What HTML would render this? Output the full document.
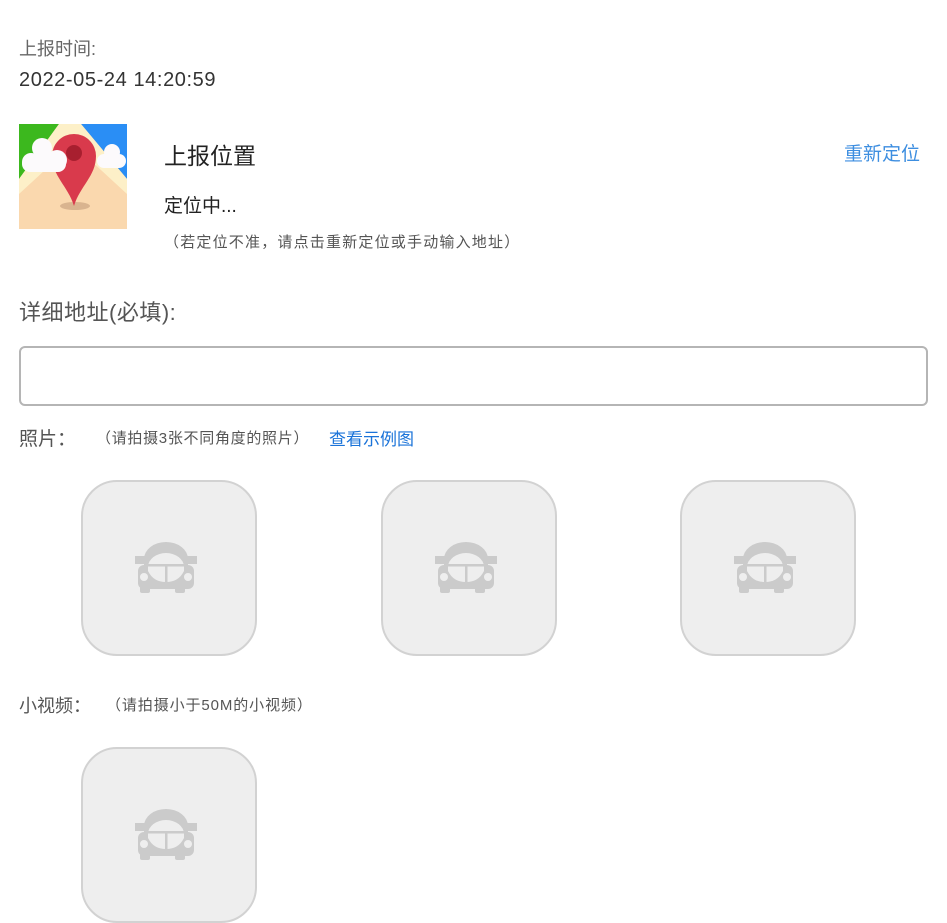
<!DOCTYPE html>
<html><head><meta charset="utf-8"><style>
body{margin:0;width:947px;height:859px;background:#fff;position:relative;overflow:hidden;font-family:"Liberation Sans","Noto Sans CJK SC",sans-serif;}
.a{position:absolute;white-space:nowrap;}
.box{position:absolute;width:172px;height:172px;border:2px solid #d2d2d2;border-radius:36px;background:#eeeeee;}
.box svg{position:absolute;left:47px;top:53px;}
</style></head><body>
<div class="a" style="left:19px;top:35px;font-size:18px;color:#666;">上报时间:</div>
<div class="a" style="left:19px;top:69px;font-size:20px;letter-spacing:0.6px;color:#333;">2022-05-24 14:20:59</div>
<svg class="a" style="left:19px;top:124px" width="108" height="105" viewBox="0 0 108 105">
<rect width="108" height="105" fill="#fad8ae"/>
<polygon points="0,0 40,0 0,55" fill="#3cb81e"/>
<polygon points="62,0 108,0 108,55" fill="#2a8ef5"/>
<polygon points="40,0 62,0 108,55 108,70 70,35 38,35 0,70 0,55" fill="#fdf0c8"/>
<ellipse cx="56" cy="82" rx="15" ry="4" fill="#d9b48f"/>
<path d="M55 82 C49 62 33 52 33 32 A22 22 0 0 1 77 32 C77 52 61 62 55 82Z" fill="#d93a4c"/>
<circle cx="55" cy="29" r="8" fill="#a81f2f"/>
<g fill="#fcfafc"><circle cx="23" cy="24" r="10"/><circle cx="38" cy="36" r="10"/><circle cx="12" cy="38" r="9"/><rect x="3" y="32" width="44" height="16" rx="8"/>
<circle cx="93" cy="28" r="8"/><rect x="78" y="30" width="29" height="14" rx="7"/></g>
</svg>
<div class="a" style="left:164px;top:137px;font-size:23px;color:#222;">上报位置</div>
<div class="a" style="left:844px;top:139px;font-size:19px;color:#3d8ee0;">重新定位</div>
<div class="a" style="left:164px;top:191px;font-size:19px;color:#222;">定位中...</div>
<div class="a" style="left:164px;top:231px;font-size:15px;letter-spacing:1.2px;color:#555;">（若定位不准，请点击重新定位或手动输入地址）</div>
<div class="a" style="left:19px;top:295px;font-size:22px;letter-spacing:0.5px;color:#555;">详细地址(必填):</div>
<div class="a" style="left:19px;top:346px;width:905px;height:56px;border:2px solid #b5b5b5;border-radius:6px;"></div>
<div class="a" style="left:19px;top:424px;font-size:19px;color:#555;">照片：</div>
<div class="a" style="left:96px;top:427px;font-size:15px;letter-spacing:0.7px;color:#555;">（请拍摄3张不同角度的照片）</div>
<div class="a" style="left:329px;top:425px;font-size:17px;color:#1a73d9;">查看示例图</div>
<div class="box" style="left:81px;top:480px;"><svg width="75" height="65" viewBox="0 0 75 65" style="left:47px;top:53px"><g fill="#cbcbcb"><path d="M14 52 V24 A22 17 0 0 1 58 24 V52Z"/><rect x="5" y="21" width="10" height="8"/><rect x="57" y="21" width="10" height="8"/><rect x="8" y="30" width="56" height="24" rx="6"/><rect x="10" y="50" width="10" height="8" rx="2"/><rect x="45" y="50" width="10" height="8" rx="2"/></g><path d="M18 32 A18 14 0 0 1 54 32 L54 36 C50 44 44 47 36 47 C28 47 22 44 18 36Z" fill="#eee"/><rect x="35" y="30" width="2.5" height="18" fill="#cbcbcb"/><rect x="18" y="29" width="36" height="2.5" fill="#cbcbcb"/><circle cx="14" cy="42" r="4" fill="#eee"/><circle cx="58" cy="42" r="4" fill="#eee"/></svg></div>
<div class="box" style="left:381px;top:480px;"><svg width="75" height="65" viewBox="0 0 75 65" style="left:47px;top:53px"><g fill="#cbcbcb"><path d="M14 52 V24 A22 17 0 0 1 58 24 V52Z"/><rect x="5" y="21" width="10" height="8"/><rect x="57" y="21" width="10" height="8"/><rect x="8" y="30" width="56" height="24" rx="6"/><rect x="10" y="50" width="10" height="8" rx="2"/><rect x="45" y="50" width="10" height="8" rx="2"/></g><path d="M18 32 A18 14 0 0 1 54 32 L54 36 C50 44 44 47 36 47 C28 47 22 44 18 36Z" fill="#eee"/><rect x="35" y="30" width="2.5" height="18" fill="#cbcbcb"/><rect x="18" y="29" width="36" height="2.5" fill="#cbcbcb"/><circle cx="14" cy="42" r="4" fill="#eee"/><circle cx="58" cy="42" r="4" fill="#eee"/></svg></div>
<div class="box" style="left:680px;top:480px;"><svg width="75" height="65" viewBox="0 0 75 65" style="left:47px;top:53px"><g fill="#cbcbcb"><path d="M14 52 V24 A22 17 0 0 1 58 24 V52Z"/><rect x="5" y="21" width="10" height="8"/><rect x="57" y="21" width="10" height="8"/><rect x="8" y="30" width="56" height="24" rx="6"/><rect x="10" y="50" width="10" height="8" rx="2"/><rect x="45" y="50" width="10" height="8" rx="2"/></g><path d="M18 32 A18 14 0 0 1 54 32 L54 36 C50 44 44 47 36 47 C28 47 22 44 18 36Z" fill="#eee"/><rect x="35" y="30" width="2.5" height="18" fill="#cbcbcb"/><rect x="18" y="29" width="36" height="2.5" fill="#cbcbcb"/><circle cx="14" cy="42" r="4" fill="#eee"/><circle cx="58" cy="42" r="4" fill="#eee"/></svg></div>
<div class="a" style="left:19px;top:692px;font-size:18px;color:#555;">小视频：</div>
<div class="a" style="left:106px;top:694px;font-size:15px;letter-spacing:0.9px;color:#555;">（请拍摄小于50M的小视频）</div>
<div class="box" style="left:81px;top:747px;"><svg width="75" height="65" viewBox="0 0 75 65" style="left:47px;top:53px"><g fill="#cbcbcb"><path d="M14 52 V24 A22 17 0 0 1 58 24 V52Z"/><rect x="5" y="21" width="10" height="8"/><rect x="57" y="21" width="10" height="8"/><rect x="8" y="30" width="56" height="24" rx="6"/><rect x="10" y="50" width="10" height="8" rx="2"/><rect x="45" y="50" width="10" height="8" rx="2"/></g><path d="M18 32 A18 14 0 0 1 54 32 L54 36 C50 44 44 47 36 47 C28 47 22 44 18 36Z" fill="#eee"/><rect x="35" y="30" width="2.5" height="18" fill="#cbcbcb"/><rect x="18" y="29" width="36" height="2.5" fill="#cbcbcb"/><circle cx="14" cy="42" r="4" fill="#eee"/><circle cx="58" cy="42" r="4" fill="#eee"/></svg></div>
</body></html>
